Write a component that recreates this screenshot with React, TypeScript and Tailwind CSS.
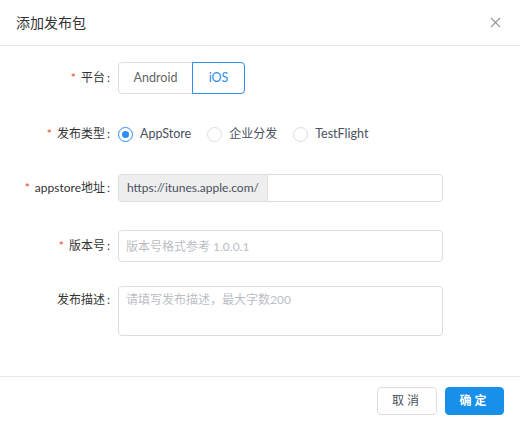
import { useState } from 'react';

type Platform = 'Android' | 'iOS';
type ReleaseType = 'AppStore' | '企业分发' | 'TestFlight';

const font = { fontFamily: 'Lato, "Noto Sans CJK SC", sans-serif' };

function Label({ text, required = false }: { text: string; required?: boolean }) {
  return (
    <div className="w-[110px] shrink-0 text-right text-[12px] leading-[32px] text-[#333]">
      {required ? <span className="mr-[5px] text-[#ed3f14]">*</span> : null}
      {text}
      <span className="ml-[2px]">:</span>
    </div>
  );
}

export default function App() {
  const [platform, setPlatform] = useState<Platform>('iOS');
  const [releaseType, setReleaseType] = useState<ReleaseType>('AppStore');

  return (
    <div className="flex h-[423px] w-[520px] flex-col bg-white" style={font}>
      {/* header */}
      <div className="flex h-[46px] shrink-0 items-center justify-between border-b border-[#e9eaec] pl-4 pr-[19px]">
        <span className="text-[14px] text-[#333]">添加发布包</span>
        <svg width="11" height="11" viewBox="0 0 11 11" className="text-[#999]">
          <path d="M1 1L10 10M10 1L1 10" stroke="currentColor" strokeWidth="1.2" />
        </svg>
      </div>

      {/* body */}
      <div className="flex flex-1 flex-col gap-6 pt-4">
        <div className="flex h-8 items-start">
          <Label text="平台" required />
          <div className="ml-2 flex h-8">
            {(['Android', 'iOS'] as Platform[]).map((p, i) => {
              const active = platform === p;
              return (
                <button
                  key={p}
                  type="button"
                  onClick={() => setPlatform(p)}
                  className={
                    'h-8 text-[12.5px] ' +
                    (i === 0 ? 'w-[75px] rounded-l-[4px] ' : 'w-[53px] -ml-px rounded-r-[4px] ') +
                    (active
                      ? 'relative z-10 border border-[#2d8cf0] text-[#2d8cf0]'
                      : 'border border-[#dddee1] text-[#666]')
                  }
                >
                  {p}
                </button>
              );
            })}
          </div>
        </div>

        <div className="flex h-8 items-center">
          <Label text="发布类型" required />
          <div className="ml-2 flex items-center gap-4">
            {(['AppStore', '企业分发', 'TestFlight'] as ReleaseType[]).map((t) => {
              const checked = releaseType === t;
              return (
                <label
                  key={t}
                  className="flex cursor-pointer items-center gap-[7px] text-[12.5px] text-[#495060]"
                  onClick={() => setReleaseType(t)}
                >
                  <span
                    className={
                      'flex h-[15px] w-[15px] items-center justify-center rounded-full border bg-white ' +
                      (checked ? 'border-[#2d8cf0]' : 'border-[#dddee1]')
                    }
                  >
                    {checked ? <span className="h-[7px] w-[7px] rounded-full bg-[#2d8cf0]" /> : null}
                  </span>
                  <span className={t === '企业分发' ? 'text-[12px]' : ''}>{t}</span>
                </label>
              );
            })}
          </div>
        </div>

        <div className="flex h-8 items-start">
          <div className="-mt-[2px]">
            <Label text="appstore地址" required />
          </div>
          <div className="ml-2 flex h-[28px] w-[325px]">
            <span className="flex items-center rounded-l-[4px] border border-[#dddee1] bg-[#eee] px-2 text-[12px] text-[#495060]">
              https://itunes.apple.com/
            </span>
            <input className="-ml-px min-w-0 flex-1 rounded-r-[4px] border border-[#dddee1] px-2 text-[12px] outline-none" />
          </div>
        </div>

        <div className="flex h-8 items-start">
          <Label text="版本号" required />
          <input
            placeholder="版本号格式参考 1.0.0.1"
            className="ml-2 h-8 w-[325px] rounded-[4px] border border-[#dddee1] px-[7px] text-[12px] text-[#495060] outline-none placeholder:text-[#bbbec4]"
          />
        </div>

        <div className="flex items-start">
          <div className="-mt-[2px]">
            <Label text="发布描述" />
          </div>
          <textarea
            placeholder="请填写发布描述，最大字数200"
            className="ml-2 h-[50px] w-[325px] resize-none rounded-[4px] border border-[#dddee1] px-[7px] py-[4px] text-[12px] text-[#495060] outline-none placeholder:text-[#bbbec4]"
          />
        </div>
      </div>

      {/* footer */}
      <div className="flex h-[47px] shrink-0 items-start justify-end gap-2 border-t border-[#e9eaec] pr-4 pt-[10px]">
        <button
          type="button"
          className="h-[28px] w-[60px] rounded-[4px] border border-[#dddee1] bg-white text-[12px] tracking-[3px] text-[#495060]"
        >
          取消
        </button>
        <button
          type="button"
          className="h-[28px] w-[59px] rounded-[4px] border border-[#1890ea] bg-[#1890ea] text-[12px] font-bold tracking-[3px] text-white"
        >
          确定
        </button>
      </div>
    </div>
  );
}
